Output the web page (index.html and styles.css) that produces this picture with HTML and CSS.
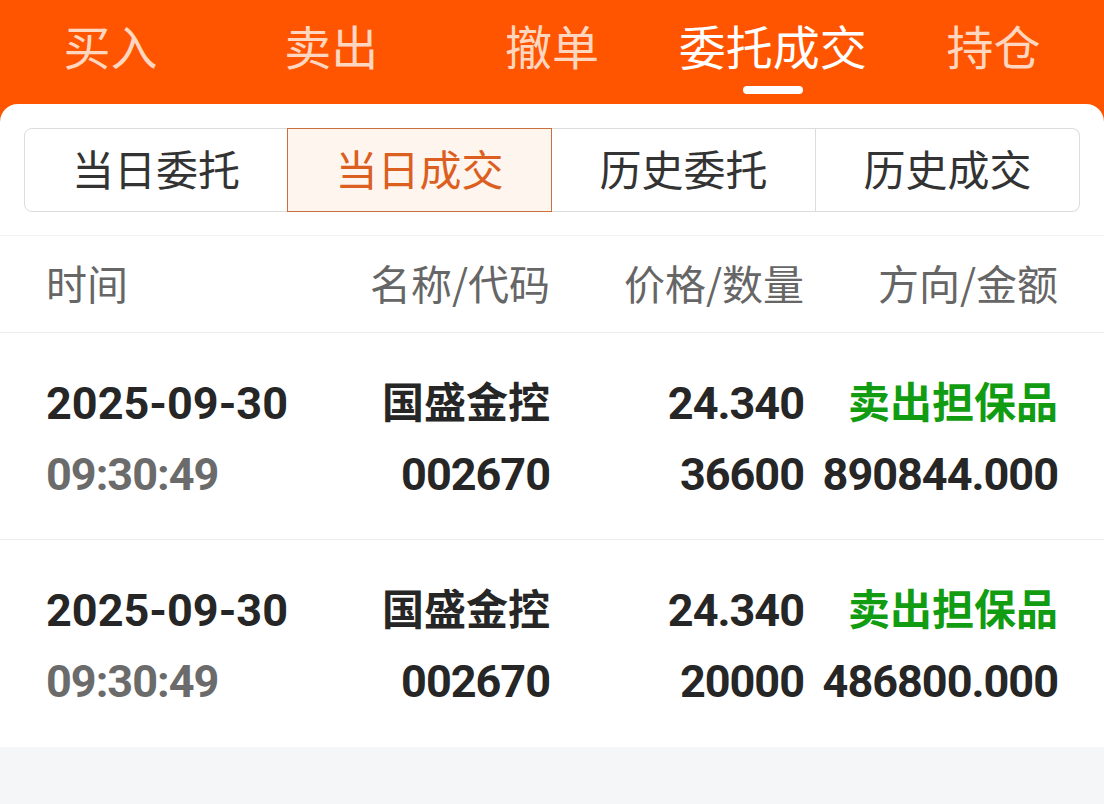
FILE: index.html
```html
<!DOCTYPE html>
<html lang="zh-CN">
<head>
<meta charset="utf-8">
<title>委托成交</title>
<link rel="stylesheet" href="styles.css">
</head>
<body>
<div class="app">
  <nav class="tabs">
    <div class="tab">买入</div>
    <div class="tab">卖出</div>
    <div class="tab">撤单</div>
    <div class="tab tab-active">委托成交<span class="indicator"></span></div>
    <div class="tab">持仓</div>
  </nav>
  <section class="card">
    <div class="segments">
      <div class="seg">当日委托</div>
      <div class="seg seg-active">当日成交</div>
      <div class="seg">历史委托</div>
      <div class="seg">历史成交</div>
    </div>
    <div class="thead">
      <div class="c1">时间</div>
      <div class="c2">名称/代码</div>
      <div class="c3">价格/数量</div>
      <div class="c4">方向/金额</div>
    </div>
    <div class="row">
      <div class="c1"><div class="num date">2025-09-30</div><div class="num muted">09:30:49</div></div>
      <div class="c2"><div class="cjk">国盛金控</div><div class="num">002670</div></div>
      <div class="c3"><div class="num">24.340</div><div class="num">36600</div></div>
      <div class="c4"><div class="cjk green">卖出担保品</div><div class="num">890844.000</div></div>
    </div>
    <div class="row row-last">
      <div class="c1"><div class="num date">2025-09-30</div><div class="num muted">09:30:49</div></div>
      <div class="c2"><div class="cjk">国盛金控</div><div class="num">002670</div></div>
      <div class="c3"><div class="num">24.340</div><div class="num">20000</div></div>
      <div class="c4"><div class="cjk green">卖出担保品</div><div class="num">486800.000</div></div>
    </div>
  </section>
</div>
</body>
</html>
```

FILE: styles.css
```css
* { box-sizing: border-box; }
html, body { margin: 0; padding: 0; }
body {
  background: #f5f6f8;
  font-family: "Noto Sans CJK SC", "Noto Sans", sans-serif;
  color: #222;
}
.app {
  background: linear-gradient(#ff5500 0, #ff5500 130px, #f5f6f8 130px);
  min-height: 804px;
}
.tabs {
  display: grid;
  grid-template-columns: repeat(5, 1fr);
  height: 104px;
}
.tab {
  position: relative;
  text-align: center;
  font-size: 47px;
  line-height: 56px;
  padding-top: 17px;
  color: #ffd7c0;
}
.tab-active { color: #ffffff; }
.indicator {
  position: absolute;
  left: 50%;
  top: 86px;
  width: 60px;
  height: 8px;
  margin-left: -30px;
  border-radius: 4px;
  background: #fff;
}
.card {
  background: #fff;
  border-radius: 18px 18px 0 0;
}
.segments {
  display: grid;
  grid-template-columns: repeat(4, 1fr);
  margin: 0 24px;
  padding-top: 24px;
}
.seg {
  height: 84px;
  line-height: 78px;
  text-align: center;
  font-size: 42px;
  color: #333;
  border: 1px solid #dcdcdc;
  border-left: none;
}
.seg:first-child { border-left: 1px solid #dcdcdc; border-radius: 8px 0 0 8px; }
.seg:last-child { border-radius: 0 8px 8px 0; }
.seg-active {
  background: #fff5ef;
  color: #dc5f22;
  border: 1px solid #c9703e;
  margin-left: -1px;
}
.thead, .row {
  display: grid;
  grid-template-columns: 250px 254px 254px 254px;
  padding: 0 46px;
}
.thead {
  margin-top: 23px;
  border-top: 1px solid #f2f2f2;
  border-bottom: 1px solid #ececec;
  height: 98px;
  padding-bottom: 4px;
  align-items: center;
  font-size: 41px;
  color: #666;
}
.c2, .c3, .c4 { text-align: right; }
.row {
  padding-top: 35px;
  padding-bottom: 29px;
  border-bottom: 1px solid #ececec;
}
.row-last { border-bottom: none; padding-bottom: 30px; }
.num, .cjk {
  height: 71px;
  line-height: 71px;
  font-weight: 700;
  white-space: nowrap;
}
.num {
  font-family: "Roboto", "Noto Sans", sans-serif;
  font-size: 45px;
  letter-spacing: -1px;
  color: #262626;
}
.date { letter-spacing: 0; }
.cjk {
  font-family: "Noto Sans CJK SC", sans-serif;
  font-size: 42px;
  line-height: 64px;
  color: #262626;
}
.muted { color: #6b6b6b; }
.green { color: #119c11; }
```
